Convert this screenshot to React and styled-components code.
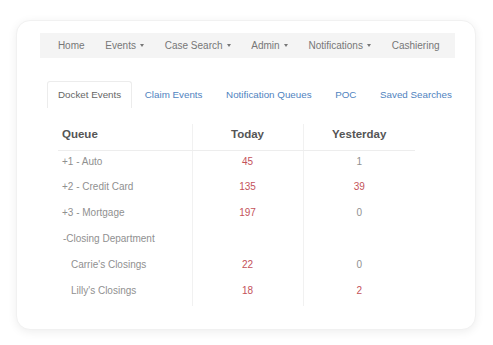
import React from "react";
import styled, { createGlobalStyle } from "styled-components";

const Global = createGlobalStyle`
  html, body { margin: 0; padding: 0; background: #ffffff; }
  body { font-family: "Liberation Sans", Arial, sans-serif; }
`;

const Page = styled.div`
  width: 493px;
  height: 345px;
  padding: 20px 17px 0 16px;
  box-sizing: border-box;
`;

const Card = styled.div`
  width: 460px;
  height: 310px;
  box-sizing: border-box;
  background: #fff;
  border-radius: 14px;
  border: 1px solid #f1f1f1;
  box-shadow: 0 2px 10px rgba(0, 0, 0, 0.07);
  padding: 12px 20px 0 23px;
`;

const NavBar = styled.nav`
  display: flex;
  align-items: center;
  height: 25px;
  background: #f4f4f4;
  padding-left: 7.5px;
  width: 415px;
  box-sizing: border-box;
`;

const NavItem = styled.span`
  display: flex;
  align-items: center;
  padding: 0 10.4px;
  font-size: 10px;
  color: #777;
  white-space: nowrap;
`;

const Caret = styled.span`
  display: inline-block;
  margin-left: 4px;
  width: 0;
  height: 0;
  border-left: 2.5px solid transparent;
  border-right: 2.5px solid transparent;
  border-top: 3px solid #777;
`;

const Tabs = styled.div`
  display: flex;
  margin: 23px 0 0 7px;
`;

const Tab = styled.span`
  display: block;
  padding: 7px 10px 7px;
  margin-right: 1.6px;
  font-size: 9.8px;
  line-height: 12px;
  white-space: nowrap;
  color: ${(p) => (p.$active ? "#666" : "#5083c0")};
  border: 1px solid ${(p) => (p.$active ? "#ececec" : "transparent")};
  border-bottom: none;
  border-radius: 3px 3px 0 0;
`;

const Table = styled.table`
  margin: 16px 0 0 18px;
  border-collapse: collapse;
  table-layout: fixed;
`;

const Col = styled.col`
  width: ${(p) => p.$w}px;
`;

const Th = styled.th`
  height: 26px;
  box-sizing: border-box;
  padding: 4px 0 0 ${(p) => (p.$left ? "4px" : "0")};
  vertical-align: top;
  font-size: 11.5px;
  line-height: 13px;
  font-weight: bold;
  color: #555;
  text-align: ${(p) => (p.$left ? "left" : "center")};
  border-bottom: 1px solid #ededed;
  border-left: ${(p) => (p.$left ? "none" : "1px solid #f1f1f1")};
`;

const Td = styled.td`
  height: 26px;
  box-sizing: border-box;
  padding: 5px 0 0 ${(p) => (p.$indent != null ? `${p.$indent}px` : "0")};
  vertical-align: top;
  font-size: 10px;
  line-height: 12px;
  white-space: nowrap;
  color: ${(p) => (p.$red ? "#c4525a" : "#909090")};
  text-align: ${(p) => (p.$indent != null ? "left" : "center")};
  border-left: ${(p) => (p.$indent != null ? "none" : "1px solid #f1f1f1")};
`;

const navItems = [
  { label: "Home" },
  { label: "Events", caret: true },
  { label: "Case Search", caret: true },
  { label: "Admin", caret: true },
  { label: "Notifications", caret: true },
  { label: "Cashiering" },
];

const tabs = ["Docket Events", "Claim Events", "Notification Queues", "POC", "Saved Searches"];

const rows = [
  { q: "+1 - Auto", indent: 4, t: "45", y: "1" },
  { q: "+2 - Credit Card", indent: 4, t: "135", y: "39" },
  { q: "+3 - Mortgage", indent: 4, t: "197", y: "0" },
  { q: "-Closing Department", indent: 5, t: "", y: "" },
  { q: "Carrie's Closings", indent: 13, t: "22", y: "0" },
  { q: "Lilly's Closings", indent: 13, t: "18", y: "2" },
];

const isRed = (v) => v !== "" && Number(v) > 1;

export default function App() {
  return (
    <>
      <Global />
      <Page>
        <Card>
          <NavBar>
            {navItems.map((n) => (
              <NavItem key={n.label}>
                {n.label}
                {n.caret && <Caret />}
              </NavItem>
            ))}
          </NavBar>
          <Tabs>
            {tabs.map((t, i) => (
              <Tab key={t} $active={i === 0}>
                {t}
              </Tab>
            ))}
          </Tabs>
          <Table>
            <colgroup>
              <Col $w={134} />
              <Col $w={111} />
              <Col $w={112} />
            </colgroup>
            <thead>
              <tr>
                <Th $left>Queue</Th>
                <Th>Today</Th>
                <Th>Yesterday</Th>
              </tr>
            </thead>
            <tbody>
              {rows.map((r) => (
                <tr key={r.q}>
                  <Td $indent={r.indent}>{r.q}</Td>
                  <Td $red={isRed(r.t)}>{r.t}</Td>
                  <Td $red={isRed(r.y)}>{r.y}</Td>
                </tr>
              ))}
            </tbody>
          </Table>
        </Card>
      </Page>
    </>
  );
}
